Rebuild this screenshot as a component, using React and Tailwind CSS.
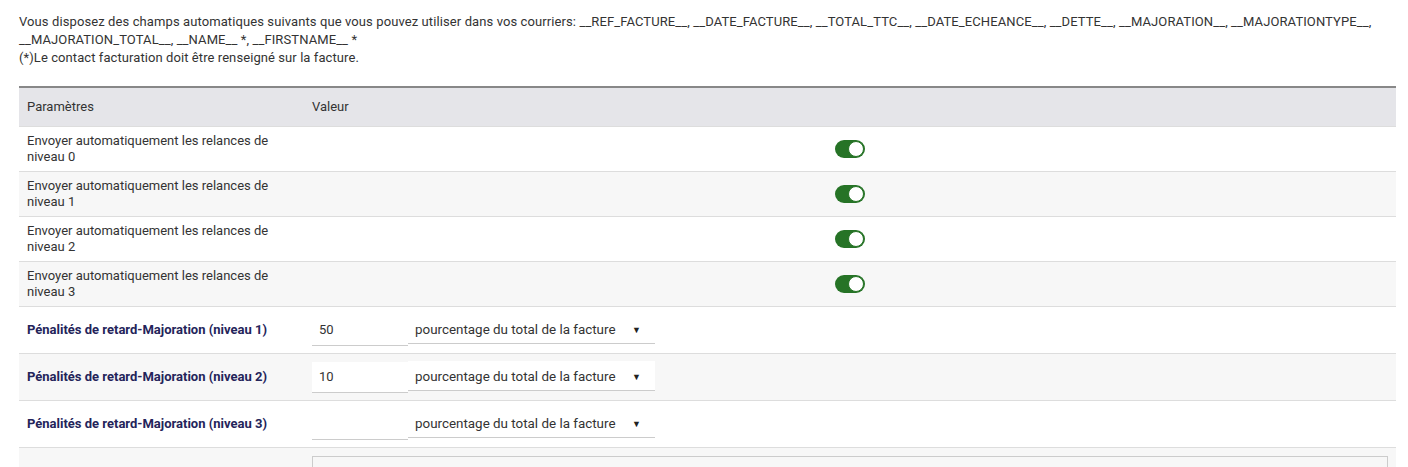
import React from "react";

function Toggle() {
  return (
    <div className="mx-auto w-[30px] h-[18px] rounded-full bg-[#267326] relative">
      <div className="absolute right-[1px] top-[1px] w-[16px] h-[16px] rounded-full bg-white border border-[#267326]" />
    </div>
  );
}

function Select() {
  return (
    <div className="w-[247px] h-[30px] flex items-center justify-between pl-[7px] pr-[14px] pt-[3px] border-b border-[#cccccc] bg-white text-[13.4px] text-[#333]">
      <span>pourcentage du total de la facture</span>
      <span className="text-[9px] text-[#222]">▼</span>
    </div>
  );
}

export default function App() {
  const relances = [0, 1, 2, 3];
  const penal = [
    { n: 1, v: "50" },
    { n: 2, v: "10" },
    { n: 3, v: "" },
  ];
  return (
    <div className="bg-white w-[1408px] h-[467px] overflow-hidden px-[19px] pt-[13px] text-[13px] leading-[18px] text-[#333]" style={{ fontFamily: "Roboto, 'Liberation Sans', sans-serif" }}>
      <div className="w-[1377px] tracking-[0.1px]">
        Vous disposez des champs automatiques suivants que vous pouvez utiliser dans vos courriers: __REF_FACTURE__, __DATE_FACTURE__, __TOTAL_TTC__, __DATE_ECHEANCE__, __DETTE__, __MAJORATION__, __MAJORATIONTYPE__, __MAJORATION_TOTAL__, __NAME__ *, __FIRSTNAME__ *
      </div>
      <div className="tracking-[0.08px]">(*)Le contact facturation doit être renseigné sur la facture.</div>

      <table className="mt-[19px] w-[1377px] border-collapse border-t-2 border-[#888888]">
        <thead>
          <tr className="bg-[#e5e5e9] h-[39px] border-b border-[#dddddd]">
            <th className="w-[286px] text-left font-normal px-[8px]">Paramètres</th>
            <th className="text-left font-normal px-[8px]">Valeur</th>
          </tr>
        </thead>
        <tbody>
          {relances.map((n, i) => (
            <tr key={n} className={`h-[45px] border-b border-[#dddddd] ${i % 2 ? "bg-[#f7f7f7]" : "bg-white"}`}>
              <td className="px-[8px] leading-[16px] align-middle">
                Envoyer automatiquement les relances de niveau {n}
              </td>
              <td className="px-[8px] align-middle">
                <Toggle />
              </td>
            </tr>
          ))}
          {penal.map((p, i) => (
            <tr key={p.n} className={`h-[47px] border-b border-[#dddddd] ${i % 2 ? "bg-[#f7f7f7]" : "bg-white"}`}>
              <td className="px-[8px] font-bold text-[#24245a] align-middle">
                Pénalités de retard-Majoration (niveau {p.n})
              </td>
              <td className="px-[8px] align-middle">
                <div className="flex items-start">
                  <div className="w-[96px] h-[31px] mt-[1px] flex items-center pl-[7px] bg-white border-b border-[#cccccc] text-[13px] text-[#333]">
                    {p.v}
                  </div>
                  <Select />
                </div>
              </td>
            </tr>
          ))}
          <tr className="h-[40px] bg-[#f7f7f7] align-top">
            <td />
            <td className="px-[8px] pt-[8px]">
              <div className="h-[40px] w-[1076px] border border-[#cccccc] bg-[#f7f7f7]" />
            </td>
          </tr>
        </tbody>
      </table>
    </div>
  );
}
